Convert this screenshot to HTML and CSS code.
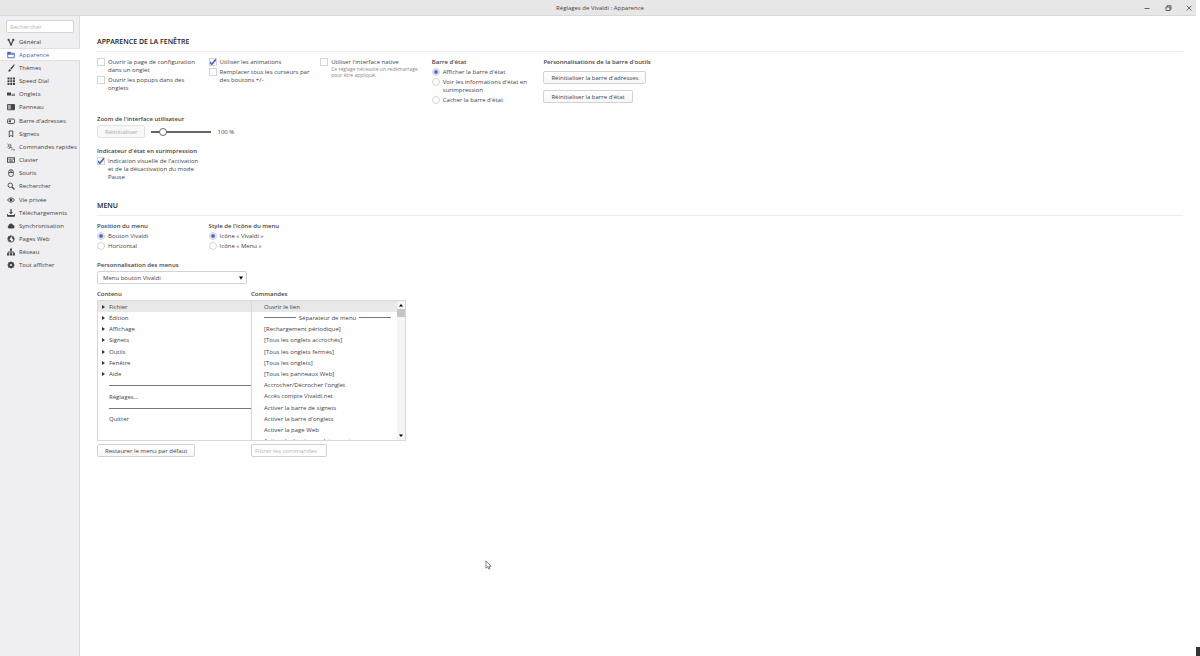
FILE: index.html
```
<!DOCTYPE html>
<html lang="fr">
<head>
    <meta charset="UTF-8">
    <meta name="viewport" content="width=device-width, initial-scale=1.0">
    <title>Réglages de Vivaldi : Apparence</title>
    <link rel="stylesheet" href="styles.css">
</head>
<body>
    <div class="window">
        <header class="titlebar">
            <div class="title">Réglages de Vivaldi : Apparence</div>
            <div class="window-buttons">
                <button type="button" aria-label="Réduire"><svg viewBox="0 0 8 8"><path d="M1.5 4.5h5"/></svg></button>
                <button type="button" aria-label="Restaurer"><svg viewBox="0 0 8 8"><path d="M2 3h4v3.5H2zM3 2.8V1.7h4v3.6H6"/></svg></button>
                <button type="button" aria-label="Fermer"><svg viewBox="0 0 8 8"><path d="M1.7 1.7l4.8 4.8M6.5 1.7L1.7 6.5"/></svg></button>
            </div>
        </header>

        <div class="layout">
            <aside class="sidebar">
                <input class="field search" type="text" placeholder="Rechercher" aria-label="Rechercher">
                <nav class="nav">
                    <a href="#"><svg viewBox="0 0 16 16"><path class="line thick" d="M3 3l5 10.500L12 5"/><circle cx="3" cy="3.500" r="2"/><circle cx="12.500" cy="3.800" r="2.300"/><circle cx="8" cy="13" r="2"/></svg>Général</a>
                    <a href="#" class="active"><svg viewBox="0 0 16 16"><path class="line" d="M1.500 13.500v-11h5l1.500 2h6.500v9zM1.500 6.500h13"/><path d="M1 2h6l1 4H1z"/></svg>Apparence</a>
                    <a href="#"><svg viewBox="0 0 16 16"><path d="M14.500.5c1 .5.500 2 0 3L9 11 6.500 9 12.500 2zM5.500 10l2.500 2c-.5 2.500-3 3.500-6 3 1.500-1 1.500-4 3.500-5z"/></svg>Thèmes</a>
                    <a href="#"><svg viewBox="0 0 16 16"><path d="M1 1h4v4H1zM6.500 1h4v4h-4zM12 1h4v4h-4zM1 6.500h4v4H1zM6.500 6.500h4v4h-4zM12 6.500h4v4h-4zM1 12h4v4H1zM6.500 12h4v4h-4zM12 12h4v4h-4z"/></svg>Speed Dial</a>
                    <a href="#"><svg viewBox="0 0 16 16"><path d="M0 5h8v6H0z"/><path class="soft" d="M9 7h7v4H9z"/><path d="M9 9.500h7V11H9z"/></svg>Onglets</a>
                    <a href="#"><svg viewBox="0 0 16 16"><path class="line" d="M1 3h14v10.500H1z"/><path d="M7 3h8v10.500H7z"/><path class="soft" d="M2 4h4v8.500H2z"/></svg>Panneau</a>
                    <a href="#"><svg viewBox="0 0 16 16"><rect class="line" x="1" y="4" width="14" height="9" rx="2.500"/><path d="M3.500 6.500H8v4H3.500z"/></svg>Barre d'adresses</a>
                    <a href="#"><svg viewBox="0 0 16 16"><path class="line" d="M4.500 2h7v12L8 10.500 4.500 14z"/></svg>Signets</a>
                    <a href="#"><svg viewBox="0 0 16 16"><path class="line" d="M1 2l3.500 3L1 8M5 2l3.500 3L5 8M9 13.500h2M12.500 13.500h3M3 11l4-2 4 1"/></svg>Commandes rapides</a>
                    <a href="#"><svg viewBox="0 0 16 16"><rect class="line" x="1" y="3.500" width="14" height="9"/><path d="M3 5.500h2v2H3zM6 5.500h2v2H6zM9 5.500h2v2H9zM12 5.500h1.500v2H12zM4 9h8v1.800H4z"/></svg>Clavier</a>
                    <a href="#"><svg viewBox="0 0 16 16"><rect class="line" x="3.500" y="1.500" width="9" height="13.500" rx="4"/><path class="line" d="M3.500 7h9M8 1.500V7"/></svg>Souris</a>
                    <a href="#"><svg viewBox="0 0 16 16"><circle class="line" cx="6.500" cy="6.500" r="4.500"/><path class="line thick" d="M10 10l5 5"/></svg>Rechercher</a>
                    <a href="#"><svg viewBox="0 0 16 16"><path class="line" d="M1 8c3.500-5.500 10.500-5.500 14 0-3.500 5.500-10.500 5.500-14 0z"/><circle cx="8" cy="8" r="2.800"/></svg>Vie privée</a>
                    <a href="#"><svg viewBox="0 0 16 16"><path d="M6.800 0h2.500v6H12l-4 4.500L4 6h2.800z"/><path class="line" d="M1 10v4.500h14V10"/><path d="M1 12h14v3H1z"/></svg>Téléchargements</a>
                    <a href="#"><svg viewBox="0 0 16 16"><path d="M4 13a3.500 3.500 0 0 1-.5-6.500A4.500 4.500 0 0 1 12 6a3.600 3.600 0 0 1 .5 7z"/></svg>Synchronisation</a>
                    <a href="#"><svg viewBox="0 0 16 16"><circle class="line" cx="8" cy="8" r="6.300"/><path d="M3 3l5-1.500 1 2.500-2 1.500L5 9l3 2-1 3-4-3.500L1.500 7zM11 3l3.500 4-.5 3-3-2-1-3z"/></svg>Pages Web</a>
                    <a href="#"><svg viewBox="0 0 16 16"><path d="M6 1h4v4.500H6zM0 10.500h4.500V15H0zM5.800 10.500h4.500V15H5.800zM11.500 10.500H16V15h-4.500z"/><path class="line" d="M8 5v6M2.300 11V8h11.500v3"/></svg>Réseau</a>
                    <a href="#"><svg viewBox="0 0 16 16"><circle class="ring" cx="8" cy="8" r="4"/><path class="line thick" d="M8 1v3M8 12v3M1 8h3M12 8h3M3 3l2 2M11 11l2 2M13 3l-2 2M5 11l-2 2"/></svg>Tout afficher</a>
                </nav>
            </aside>

            <main class="content">
                <section>
                    <h2>Apparence de la fenêtre</h2>
                    <div class="columns window-options">
                        <div class="column">
                            <label class="option"><input type="checkbox"><span>Ouvrir la page de configuration dans un onglet</span></label>
                            <label class="option"><input type="checkbox"><span>Ouvrir les popups dans des onglets</span></label>
                        </div>
                        <div class="column">
                            <label class="option"><input type="checkbox" checked><span>Utiliser les animations</span></label>
                            <label class="option"><input type="checkbox"><span>Remplacer tous les curseurs par des boutons +/-</span></label>
                        </div>
                        <div class="column">
                            <label class="option"><input type="checkbox"><span>Utiliser l'interface native <small>Ce réglage nécessite un redémarrage pour être appliqué.</small></span></label>
                        </div>
                        <div class="column">
                            <h3>Barre d'état</h3>
                            <label class="option"><input type="radio" name="status" checked><span>Afficher la barre d'état</span></label>
                            <label class="option"><input type="radio" name="status"><span>Voir les informations d'état en surimpression</span></label>
                            <label class="option"><input type="radio" name="status"><span>Cacher la barre d'état</span></label>
                        </div>
                        <div class="column">
                            <h3>Personnalisations de la barre d'outils</h3>
                            <div class="button-stack">
                                <button class="button" type="button">Réinitialiser la barre d'adresses</button>
                                <button class="button" type="button">Réinitialiser la barre d'état</button>
                            </div>
                        </div>
                    </div>

                    <div class="group">
                        <h3><label for="zoom">Zoom de l'interface utilisateur</label></h3>
                        <div class="zoom-row">
                            <button class="button" type="button" disabled>Réinitialiser</button>
                            <input type="range" id="zoom" min="80" max="200" value="97">
                            <span>100 %</span>
                        </div>
                    </div>

                    <div class="group overlay-group">
                        <h3>Indicateur d'état en surimpression</h3>
                        <label class="option"><input type="checkbox" checked><span>Indication visuelle de l'activation et de la désactivation du mode Pause</span></label>
                    </div>
                </section>

                <section class="menu-section">
                    <h2>Menu</h2>
                    <div class="columns">
                        <div class="column">
                            <h3>Position du menu</h3>
                            <label class="option"><input type="radio" name="position" checked><span>Bouton Vivaldi</span></label>
                            <label class="option"><input type="radio" name="position"><span>Horizontal</span></label>
                        </div>
                        <div class="column">
                            <h3>Style de l'icône du menu</h3>
                            <label class="option"><input type="radio" name="icon" checked><span>Icône « Vivaldi »</span></label>
                            <label class="option"><input type="radio" name="icon"><span>Icône « Menu »</span></label>
                        </div>
                    </div>

                    <div class="group select-group">
                        <h3><label for="menu">Personnalisation des menus</label></h3>
                        <select id="menu">
                            <option>Menu bouton Vivaldi</option>
                        </select>
                    </div>

                    <div class="editor">
                        <h3>Contenu</h3>
                        <h3>Commandes</h3>
                        <div class="list-box tree">
                            <ul class="list">
                                <li class="parent selected">Fichier</li>
                                <li class="parent">Édition</li>
                                <li class="parent">Affichage</li>
                                <li class="parent">Signets</li>
                                <li class="parent">Outils</li>
                                <li class="parent">Fenêtre</li>
                                <li class="parent">Aide</li>
                                <li class="rule"></li>
                                <li>Réglages...</li>
                                <li class="rule"></li>
                                <li>Quitter</li>
                            </ul>
                        </div>
                        <div class="list-box commands">
                            <ul class="list">
                                <li class="selected">Ouvrir le lien</li>
                                <li class="separator">Séparateur de menu</li>
                                <li>[Rechargement périodique]</li>
                                <li>[Tous les onglets accrochés]</li>
                                <li>[Tous les onglets fermés]</li>
                                <li>[Tous les onglets]</li>
                                <li>[Tous les panneaux Web]</li>
                                <li>Accrocher/Décrocher l'onglet</li>
                                <li>Accès compte Vivaldi.net</li>
                                <li>Activer la barre de signets</li>
                                <li>Activer la barre d'onglets</li>
                                <li>Activer la page Web</li>
                                <li>Activer le dernier onglet ouvert</li>
                            </ul>
                            <div class="scrollbar">
                                <svg viewBox="0 0 8 8"><path d="M2 5.500h4L4 3z"/></svg>
                                <div class="thumb"></div>
                                <svg viewBox="0 0 8 8"><path d="M2 2.500h4L4 5z"/></svg>
                            </div>
                        </div>
                        <div><button class="button" type="button">Restaurer le menu par défaut</button></div>
                        <div><input class="field filter" type="text" placeholder="Filtrer les commandes" aria-label="Filtrer les commandes"></div>
                    </div>
                </section>
            </main>
        </div>
    </div>

    <svg class="cursor" viewBox="0 0 7 10"><path d="M1 .8v7.400l1.700-1.500 1.200 2.500 1.100-.6-1.100-2.300h2.200z"/></svg>
    <div class="corner"></div>
</body>
</html>
```
FILE: styles.css
```
* {
    box-sizing: border-box;
}

body {
    margin: 0;
    background-color: #fff;
    color: #444;
    font-family: "Open Sans", "Noto Sans", sans-serif;
    font-size: 6px;
    line-height: 8px;
}

button, input, select {
    font: inherit;
    color: inherit;
    margin: 0;
}

h2, h3, ul {
    margin: 0;
    padding: 0;
}

.window {
    display: flex;
    flex-direction: column;
    min-height: 100vh;
    margin-right: 4px;
}

/* title bar */
.titlebar {
    display: grid;
    grid-template-columns: 1fr auto 1fr;
    align-items: center;
    height: 16px;
    background-color: #e7e7e7;
    border-bottom: 1px solid #d8d8d8;
}

.title {
    grid-column: 2;
    padding-left: 4px;
}

.window-buttons {
    display: flex;
    justify-content: flex-end;
    gap: 13px;
    padding-right: 3px;
}

.window-buttons button {
    display: flex;
    padding: 0;
    border: none;
    background: none;
}

.window-buttons svg {
    width: 8px;
    height: 8px;
    fill: none;
    stroke: #444;
    stroke-width: 0.8;
}

.layout {
    display: flex;
    flex: 1;
}

/* sidebar */
.sidebar {
    flex: 0 0 80px;
    padding-top: 4px;
    background-color: #efeef0;
    border-right: 1px solid #dcdcdc;
}

.field {
    display: block;
    height: 13px;
    padding: 0 3px;
    border: 1px solid #d2d2d2;
    border-radius: 2px;
    background-color: #fff;
}

.field::placeholder {
    color: #b5b5b5;
}

.search {
    width: 68px;
    margin: 0 0 2px 6px;
}

.nav {
    display: grid;
    grid-auto-rows: 1fr;
    height: 237px;
}

.nav a {
    display: flex;
    align-items: center;
    gap: 4px;
    padding-left: 7px;
    color: inherit;
    text-decoration: none;
    white-space: nowrap;
}

.nav .active {
    margin-right: -1px;
    background-color: #fff;
    border-top: 1px solid #e0e0e0;
    border-bottom: 1px solid #e0e0e0;
    color: #4a63cf;
}

.nav svg {
    flex: none;
    width: 8px;
    height: 8px;
    fill: currentColor;
}

.nav .line,
.nav .ring {
    fill: none;
    stroke: currentColor;
    stroke-width: 1.8;
}

.nav .ring {
    stroke-width: 4;
}

.nav .thick {
    stroke-width: 2.5;
}

.nav .soft {
    opacity: 0.4;
}

/* settings */
.content {
    flex: 1;
    padding: 22px 13px 0 17px;
}

h2 {
    height: 14px;
    margin-bottom: 6px;
    border-bottom: 1px solid #ececec;
    color: #222;
    font-size: 7px;
    font-weight: 600;
    text-transform: uppercase;
}

h3 {
    font-size: 6px;
    font-weight: 600;
    white-space: nowrap;
}

.columns {
    display: grid;
    grid-template-columns: repeat(5, minmax(0, 1fr));
    column-gap: 7px;
    max-width: 551px;
}

.column {
    display: flex;
    flex-direction: column;
    gap: 2px;
}

.window-options {
    min-height: 57px;
}

.option {
    display: flex;
    align-items: flex-start;
    gap: 3px;
}

.option input {
    appearance: none;
    flex: none;
    width: 8px;
    height: 8px;
    border: 1px solid #d5d5d5;
    background-color: #fff;
}

.option input[type="radio"] {
    border-radius: 50%;
}

.option input[type="radio"]:checked {
    background-image: radial-gradient(circle, #4a63cf 1px, transparent 3px);
}

.option input[type="checkbox"]:checked {
    background: url("data:image/svg+xml,%3Csvg xmlns='http://www.w3.org/2000/svg' viewBox='0 0 8 8'%3E%3Cpath d='M.5 4l2.300 2.300L7.500.8' fill='none' stroke='%234a63cf' stroke-width='1.800'/%3E%3C/svg%3E") center / 8px 8px no-repeat border-box #fff;
}

small {
    display: block;
    color: #888;
    font-size: 5px;
    line-height: 6px;
}

.button {
    height: 13px;
    padding: 0 7px;
    border: 1px solid #d2d2d2;
    border-radius: 2px;
    background: linear-gradient(#fff, #f6f6f6);
    white-space: nowrap;
}

.button:disabled {
    border-color: #e2e2e2;
    background: #f8f8f8;
    color: #aaa;
}

.button-stack {
    display: flex;
    flex-direction: column;
    align-items: flex-start;
    gap: 6px;
    padding-top: 3px;
}

.zoom-row {
    display: flex;
    align-items: center;
    gap: 6px;
    margin-top: 2px;
}

input[type="range"] {
    appearance: none;
    width: 60px;
    height: 8px;
    background: linear-gradient(#666, #666) center / 100% 2px no-repeat;
}

input[type="range"]::-webkit-slider-thumb {
    appearance: none;
    width: 8px;
    height: 8px;
    border: 1px solid #666;
    border-radius: 50%;
    background-color: #fff;
}

.overlay-group {
    max-width: 104px;
    margin-top: 9px;
}

.overlay-group .option {
    margin-top: 2px;
}

.menu-section {
    margin-top: 21px;
}

.select-group {
    margin-top: 11px;
}

select {
    appearance: none;
    display: block;
    width: 150px;
    height: 13px;
    margin-top: 2px;
    padding: 0 5px;
    border: 1px solid #d2d2d2;
    border-radius: 2px;
    background: url("data:image/svg+xml,%3Csvg xmlns='http://www.w3.org/2000/svg' viewBox='0 0 5 5'%3E%3Cpath d='M0 .5h5L2.500 4.800z'/%3E%3C/svg%3E") right 3px center / 4px 4px no-repeat #fff;
}

/* menu editor */
.editor {
    display: grid;
    grid-template-columns: 154px 155px;
    margin-top: 6px;
}

.list-box {
    display: flex;
    height: 141px;
    margin: 2px 0 3px;
    border: 1px solid #d8d8d8;
    overflow: hidden;
}

.tree {
    border-right: none;
}

.list {
    flex: 1;
    display: grid;
    grid-auto-rows: 1fr;
    height: 124px;
    list-style: none;
}

.commands .list {
    height: 146px;
}

.list li {
    display: flex;
    align-items: center;
    padding-left: 11px;
    white-space: nowrap;
}

.commands .list li {
    padding-left: 12px;
}

.list .selected {
    background-color: #e8e8e8;
}

.list .parent {
    padding-left: 4px;
}

.parent::before {
    content: "";
    margin-right: 4px;
    border: 2px solid transparent;
    border-left: 3px solid #333;
    border-right: none;
}

.rule::before,
.separator::before,
.separator::after {
    content: "";
    flex: 1;
    height: 1px;
    background-color: #777;
}

.list .separator {
    gap: 3px;
    padding-right: 6px;
}

.scrollbar {
    display: flex;
    flex-direction: column;
    flex: none;
    width: 8px;
    background-color: #f5f5f5;
}

.scrollbar svg {
    width: 8px;
    height: 8px;
}

.thumb {
    height: 8px;
    margin-bottom: auto;
    background-color: #c4c4c4;
}

.filter {
    width: 76px;
}

/* mouse pointer and desktop edge, above the page */
.cursor {
    position: absolute;
    left: 485px;
    top: 560px;
    width: 7px;
    height: 10px;
    fill: #fff;
    stroke: #666;
    stroke-width: 0.8;
}

.corner {
    position: absolute;
    right: 0;
    bottom: 0;
    width: 4px;
    height: 9px;
    background-color: #333;
}
```
